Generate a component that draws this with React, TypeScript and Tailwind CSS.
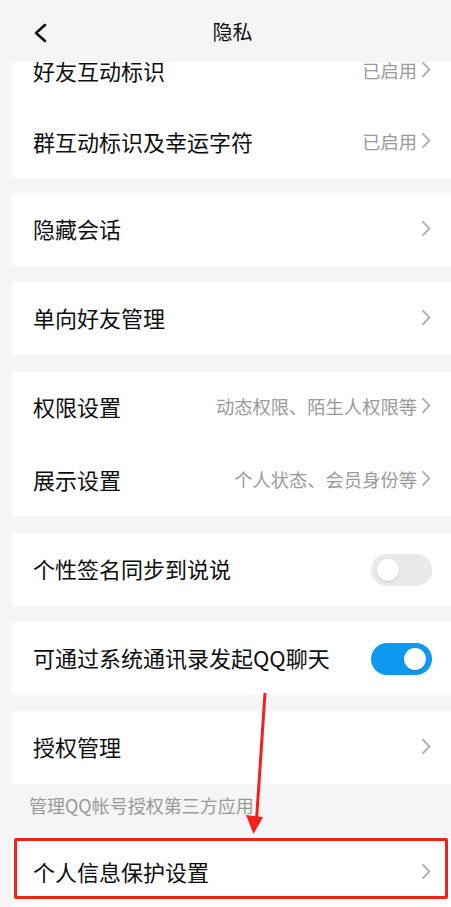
import React from 'react';

const Chevron = () => (
  <svg width="10" height="17" viewBox="0 0 10 17" className="shrink-0">
    <path d="M2 1.8 L8.4 8.5 L2 15.2" fill="none" stroke="#aaaaaa" strokeWidth="1.8" strokeLinecap="round" strokeLinejoin="round" />
  </svg>
);

const Toggle = ({ on }: { on: boolean }) => (
  <div
    className={`w-[61px] h-[32px] rounded-full flex items-center px-[6px] ${
      on ? 'bg-[#0c99ef] justify-end' : 'bg-[#e9e9e9] justify-start'
    }`}
  >
    <div className="w-[22px] h-[22px] rounded-full bg-white shadow-[0_1px_2px_rgba(0,0,0,0.15)]" />
  </div>
);

type RowProps = {
  label: string;
  hint?: string;
  toggle?: boolean;
  h?: string;
};

const Row = ({ label, hint, toggle, h = 'h-[73px]' }: RowProps) => (
  <div className={`${h} flex items-center justify-between pl-[21px] pr-[20px]`}>
    <span className="text-[22px] text-[#0d0d0d] leading-none pb-[3px]">{label}</span>
    {toggle === undefined ? (
      <div className="flex items-center gap-[4px] pb-[3px]">
        {hint && <span className="text-[18.3px] text-[#9a9a9a] leading-none">{hint}</span>}
        <Chevron />
      </div>
    ) : (
      <div className="-mr-[1px]">
        <Toggle on={toggle} />
      </div>
    )}
  </div>
);

const Card = ({ children }: { children: React.ReactNode }) => (
  <div className="bg-white">{children}</div>
);

export default function App() {
  return (
    <div
      className="relative w-[451px] h-[907px] overflow-hidden bg-[#f5f5f5]"
      style={{ fontFamily: '"Noto Sans CJK SC", "Noto Sans", sans-serif' }}
    >
      {/* header */}
      <div className="relative z-10 h-[62px] bg-[#f5f5f5] flex items-center pt-[3px]">
        <div className="pl-[32px] w-[80px]">
          <svg width="16" height="20" viewBox="0 0 16 20">
            <path d="M13 2 L4 10 L13 18" fill="none" stroke="#111111" strokeWidth="2.6" strokeLinecap="round" strokeLinejoin="round" />
          </svg>
        </div>
        <div className="flex-1 text-center text-[20px] text-[#111111] pr-[66px] pb-[2px]">隐私</div>
      </div>

      {/* scrolled content */}
      <div className="h-[845px] overflow-hidden">
        <div className="-mt-[26px] pl-[12px] flex flex-col">
          <Card>
            <Row label="好友互动标识" hint="已启用" h="h-[71px]" />
            <Row label="群互动标识及幸运字符" hint="已启用" h="h-[71px]" />
          </Card>
          <div className="h-[15px]" />
          <Card>
            <Row label="隐藏会话" />
          </Card>
          <div className="h-[16px]" />
          <Card>
            <Row label="单向好友管理" />
          </Card>
          <div className="h-[16px]" />
          <Card>
            <Row label="权限设置" hint="动态权限、陌生人权限等" />
            <Row label="展示设置" hint="个人状态、会员身份等" />
          </Card>
          <div className="h-[16px]" />
          <Card>
            <Row label="个性签名同步到说说" toggle={false} />
          </Card>
          <div className="h-[16px]" />
          <Card>
            <Row label="可通过系统通讯录发起QQ聊天" toggle={true} />
          </Card>
          <div className="h-[16px]" />
          <Card>
            <Row label="授权管理" />
          </Card>
          <div className="h-[52px] pl-[17px] pt-[9px]">
            <span className="text-[18px] leading-[24px] text-[#999999]">管理QQ帐号授权第三方应用</span>
          </div>
          <Card>
            <Row label="个人信息保护设置" />
          </Card>
        </div>
      </div>

      {/* annotation overlay */}
      <div className="absolute left-[14px] top-[838px] w-[434px] h-[61px] border-[3px] border-[#f4201a] rounded-[2px] pointer-events-none" />
      <svg className="absolute left-0 top-0 pointer-events-none" width="451" height="907" viewBox="0 0 451 907">
        <line x1="265" y1="693" x2="256.5" y2="820" stroke="#f4201a" strokeWidth="3" />
        <polygon points="246,815 263,817 253.5,834" fill="#f4201a" />
      </svg>
    </div>
  );
}
